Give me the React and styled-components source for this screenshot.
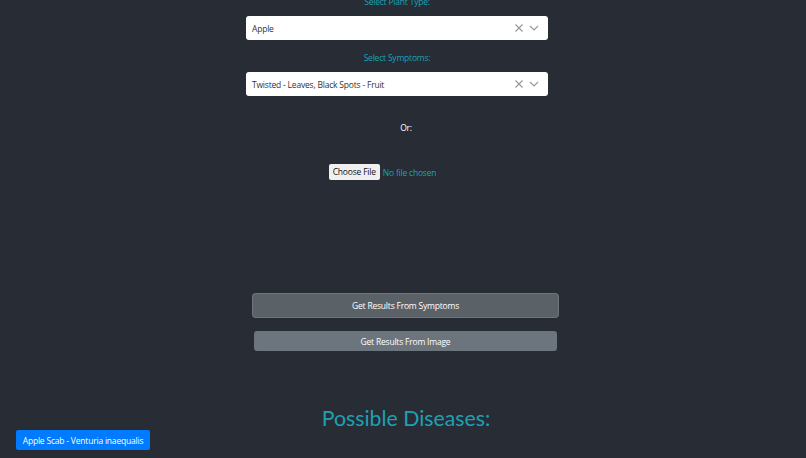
import React from "react";
import styled, { createGlobalStyle } from "styled-components";

const GlobalStyle = createGlobalStyle`
  html, body {
    margin: 0;
    padding: 0;
    background: #282c34;
    overflow: hidden;
  }
  body {
    font-family: "Open Sans", "Noto Sans", sans-serif;
    letter-spacing: -0.2px;
  }
`;

const uiFont = `"Open Sans", "Noto Sans", sans-serif`;

const Page = styled.div`
  min-height: 100vh;
  background: #282c34;
  display: flex;
  flex-direction: column;
  margin-top: -5px;
`;

const Row = styled.div`
  display: flex;
  justify-content: center;
  padding-left: ${(p) => p.$left || 0}px;
  padding-right: ${(p) => p.$right || 0}px;
  margin-top: ${(p) => p.$top || 0}px;
`;

const Field = styled.div`
  width: 302px;
  display: flex;
  flex-direction: column;
  align-items: center;
`;

const Label = styled.div`
  color: #17a2b8;
  font-size: 8.5px;
  line-height: 13px;
  margin-bottom: 8px;
`;

const SelectBox = styled.div`
  box-sizing: border-box;
  width: 302px;
  height: 24px;
  background: #fff;
  border-radius: 3px;
  display: flex;
  align-items: center;
  padding: 0 8px 0 6px;
  font-size: 8.5px;
  color: #333;
`;

const SelectValue = styled.span`
  flex: 1;
`;

const Indicator = styled.svg`
  width: 12px;
  height: 12px;
  margin-left: 3px;
  stroke: #9a9a9a;
  fill: none;
  stroke-width: 1.2;
`;

const Or = styled.div`
  color: #fff;
  font-size: 8.5px;
  text-align: center;
  margin-top: 26px;
  padding-left: 6px;
`;

const FileRow = styled(Row)`
  align-items: center;
  gap: 3px;
  font-size: 8.5px;
`;

const FileButton = styled.span`
  background: #f0f0f0;
  color: #111;
  padding: 0 4px;
  height: 16px;
  line-height: 16px;
  border-radius: 2px;
  white-space: nowrap;
`;

const FileText = styled.span`
  color: #17a2b8;
  white-space: nowrap;
`;

const ActionButton = styled.button`
  box-sizing: border-box;
  width: ${(p) => p.$w}px;
  height: ${(p) => p.$h}px;
  border: none;
  border-radius: 3px;
  background: ${(p) => (p.$focused ? "#5a6268" : "#6c757d")};
  box-shadow: ${(p) => (p.$focused ? "0 0 0 1px #6e757c" : "none")};
  color: #fff;
  font-family: ${uiFont};
  font-size: 8.5px;
  letter-spacing: -0.2px;
  padding: 0;
`;

const Heading = styled.h2`
  margin: 0;
  text-align: center;
  color: #1fa0b2;
  font-family: Lato, sans-serif;
  font-weight: 400;
  font-size: 21.3px;
  line-height: 24px;
  letter-spacing: 0;
  padding-left: 6px;
`;

const ResultList = styled.div`
  display: flex;
  padding-left: 16px;
`;

const ResultButton = styled.button`
  background: #007bff;
  color: #fff;
  border: none;
  border-radius: 2px;
  height: 20px;
  width: 134px;
  font-family: ${uiFont};
  font-size: 8.5px;
  letter-spacing: -0.2px;
  white-space: nowrap;
  padding: 0;
`;

function Select({ value }) {
  return (
    <SelectBox>
      <SelectValue>{value}</SelectValue>
      <Indicator viewBox="0 0 12 12">
        <path d="M2.5 2.5 L9.5 9.5 M9.5 2.5 L2.5 9.5" />
      </Indicator>
      <Indicator viewBox="0 0 12 12">
        <path d="M2 4 L6 8 L10 4" />
      </Indicator>
    </SelectBox>
  );
}

export default function App() {
  return (
    <>
      <GlobalStyle />
      <Page>
        <Row $right={12}>
          <Field>
            <Label>Select Plant Type:</Label>
            <Select value="Apple" />
          </Field>
        </Row>
        <Row $right={12} $top={11}>
          <Field>
            <Label>Select Symptoms:</Label>
            <Select value="Twisted - Leaves, Black Spots - Fruit" />
          </Field>
        </Row>
        <Or>Or:</Or>
        <FileRow $right={41} $top={31}>
          <FileButton>Choose File</FileButton>
          <FileText>No file chosen</FileText>
        </FileRow>
        <Row $left={5} $top={114}>
          <ActionButton $focused $w={305} $h={23}>
            Get Results From Symptoms
          </ActionButton>
        </Row>
        <Row $left={5} $top={14}>
          <ActionButton $w={303} $h={20}>
            Get Results From Image
          </ActionButton>
        </Row>
        <Row $top={55}>
          <Heading>Possible Diseases:</Heading>
        </Row>
        <ResultList>
          <ResultButton>Apple Scab - Venturia inaequalis</ResultButton>
        </ResultList>
      </Page>
    </>
  );
}
